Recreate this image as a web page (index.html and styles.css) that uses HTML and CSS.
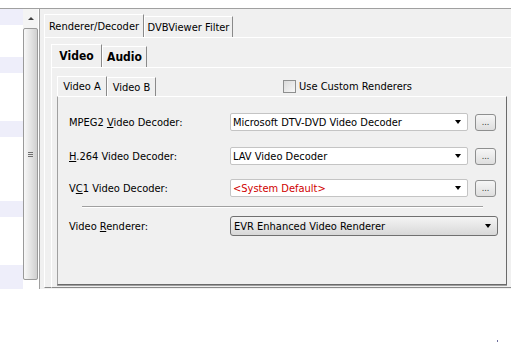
FILE: index.html
```html
<!DOCTYPE html>
<html lang="en">
<head>
    <meta charset="UTF-8">
    <title>Renderer/Decoder</title>
    <link rel="stylesheet" href="styles.css">
</head>
<body>
    <div class="window">
        <div class="list">
            <div class="list-row alt"></div>
            <div class="list-row"></div>
            <div class="list-row"></div>
            <div class="list-row alt"></div>
            <div class="list-row"></div>
            <div class="list-row"></div>
            <div class="list-row"></div>
            <div class="list-row alt"></div>
            <div class="list-row"></div>
            <div class="list-row"></div>
            <div class="list-row"></div>
            <div class="list-row"></div>
            <div class="list-row alt"></div>
            <div class="list-row"></div>
            <div class="list-row"></div>
            <div class="list-row"></div>
            <div class="list-row alt"></div>
            <div class="list-row alt"></div>
        </div>

        <div class="scrollbar">
            <div class="scroll-up"></div>
            <div class="thumb"><span class="grip"></span></div>
        </div>

        <div class="main">
            <div class="tabs tabs-outer">
                <div class="tab active">Renderer/Decoder</div>
                <div class="tab">DVBViewer Filter</div>
            </div>
            <div class="panel panel-outer">
                <div class="tabs tabs-inner">
                    <div class="tab active bold">Video</div>
                    <div class="tab bold">Audio</div>
                </div>
                <div class="panel panel-inner">
                    <div class="tabs tabs-sub">
                        <div class="tab active">Video A</div>
                        <div class="tab">Video B</div>
                        <label class="check">
                            <span class="check-box"></span>
                            Use Custom Renderers
                        </label>
                    </div>
                    <div class="panel panel-sub">
                        <div class="row">
                            <span class="label">MPEG2 <u>V</u>ideo Decoder:</span>
                            <div class="combo"><span>Microsoft DTV-DVD Video Decoder</span><i class="arrow"></i></div>
                            <button class="more">...</button>
                        </div>
                        <div class="row row-2">
                            <span class="label"><u>H</u>.264 Video Decoder:</span>
                            <div class="combo"><span>LAV Video Decoder</span><i class="arrow"></i></div>
                            <button class="more">...</button>
                        </div>
                        <div class="row row-3">
                            <span class="label">V<u>C</u>1 Video Decoder:</span>
                            <div class="combo"><span class="default">&lt;System Default&gt;</span><i class="arrow"></i></div>
                            <button class="more">...</button>
                        </div>
                        <div class="separator"></div>
                        <div class="row">
                            <span class="label">Video <u>R</u>enderer:</span>
                            <div class="combo combo-list"><span>EVR Enhanced Video Renderer</span><i class="arrow"></i></div>
                        </div>
                    </div>
                </div>
            </div>
        </div>
    </div>
    <span class="dot"></span>
</body>
</html>
```

FILE: styles.css
```css
html, body {
    margin: 0;
    padding: 0;
    overflow: hidden;
    background-color: #fff;
}
body {
    font-family: "DejaVu Sans Condensed", "DejaVu Sans", sans-serif;
    font-stretch: condensed;
    font-size: 11px;
    color: #000;
    white-space: nowrap;
}
.window {
    display: flex;
    margin-top: 8px;
    border-top: 1px solid #a0a0a0;
    height: 280px;
}

/* list on the left */
.list {
    width: 23px;
    flex: none;
}
.list-row {
    height: 16px;
}
.list-row.alt {
    background-color: #eeeefa;
}

/* scrollbar */
.scrollbar {
    width: 15px;
    height: 271px;
    flex: none;
    margin-right: 1px;
    background-color: #f4f4f4;
    display: flex;
    flex-direction: column;
}
.scroll-up {
    height: 19px;
    display: flex;
    align-items: center;
    justify-content: center;
}
.scroll-up::before {
    content: "";
    border-left: 3px solid transparent;
    border-right: 3px solid transparent;
    border-bottom: 3px solid #404040;
}
.thumb {
    flex: 1;
    border: 1px solid #9a9a9a;
    border-radius: 2px;
    background: linear-gradient(to right, #f8f8f8, #e4e4e4 50%, #cfcfcf);
    display: flex;
    align-items: center;
    justify-content: center;
}
.grip {
    width: 5px;
    height: 5px;
    background: repeating-linear-gradient(to bottom, #6f6f6f 0 1px, transparent 1px 2px);
}

/* right side */
.main {
    flex: 1;
    min-width: 0;
    overflow: hidden;
    border-left: 1px solid #a0a0a0;
    background-color: #f0f0f0;
    padding: 5px 0 0 4px;
}
.tabs {
    display: flex;
    align-items: flex-end;
    height: 23px;
}
.tab {
    box-sizing: border-box;
    height: 21px;
    padding: 0 2px;
    display: flex;
    align-items: center;
    justify-content: center;
    border-top: 1px solid #fff;
    border-left: 1px solid #fff;
    border-right: 1px solid #8a8a8a;
}
.tab.active {
    height: 23px;
}
.bold {
    font-weight: bold;
    font-size: 12px;
}
.tabs-outer .tab:nth-child(1) { width: 100px; }
.tabs-outer .tab:nth-child(2) { width: 89px; }
.tabs-inner .tab:nth-child(1) { width: 51px; }
.tabs-inner .tab:nth-child(2) { width: 45px; }
.tabs-sub {
    height: 20px;
}
.tabs-sub .tab { height: 19px; }
.tabs-sub .tab.active { height: 20px; }
.tabs-sub .tab:nth-child(1) { width: 50px; }
.tabs-sub .tab:nth-child(2) { width: 49px; }

.panel {
    box-sizing: border-box;
    border-top: 1px solid #fff;
    border-left: 1px solid #fff;
    border-right: 1px solid #8a8a8a;
    border-bottom: 1px solid #8a8a8a;
}
.panel-outer {
    width: 520px;
    height: 251px;
    padding: 6px 0 0 6px;
}
.panel-inner {
    width: 520px;
    height: 221px;
    padding: 8px 0 0 5px;
}
.panel-sub {
    width: 450px;
    height: 189px;
    padding: 16px 0 0 11px;
    border-left-color: #a0a0a0;
    border-right-color: #6a6a6a;
    border-bottom-color: #6a6a6a;
    box-shadow: 0 1px 0 #a0a0a0;
}

/* checkbox */
.check {
    display: flex;
    align-items: center;
    gap: 3px;
    margin-left: 127px;
    align-self: center;
}
.check-box {
    box-sizing: border-box;
    width: 13px;
    height: 13px;
    border: 1px solid #8e8f8f;
    background: linear-gradient(135deg, #dadada, #f7f7f7);
}

/* rows */
.row {
    display: flex;
    align-items: center;
    height: 18px;
}
.row-2 { margin-top: 16px; }
.row-3 { margin-top: 14px; }
.label {
    width: 161px;
    flex: none;
}
.combo {
    box-sizing: border-box;
    width: 238px;
    height: 18px;
    border: 1px solid #c4c4c4;
    border-radius: 2px;
    background-color: #fff;
    padding: 0 6px 0 2px;
    display: flex;
    align-items: center;
    justify-content: space-between;
}
.default {
    color: #d00000;
}
.arrow {
    width: 0;
    height: 0;
    border-left: 3px solid transparent;
    border-right: 3px solid transparent;
    border-top: 4px solid #000;
}
.more {
    box-sizing: border-box;
    width: 21px;
    height: 17px;
    margin-left: 7px;
    padding: 0;
    border: 1px solid #8e8f8f;
    border-radius: 3px;
    background: linear-gradient(#f6f6f6, #dedede);
    font-family: inherit;
    font-size: 9px;
    line-height: 14px;
    color: #333;
}
.separator {
    margin: 9px 0 9px 13px;
    width: 401px;
    height: 1px;
    background-color: #a0a0a0;
    border-bottom: 1px solid #fff;
}
.combo-list {
    width: 268px;
    height: 20px;
    border-color: #707070;
    border-radius: 3px;
    background: linear-gradient(#f4f4f4, #e6e6e6 50%, #d8d8d8);
    padding: 0 6px 0 3px;
}
.dot {
    position: absolute;
    left: 497px;
    top: 340px;
    width: 1px;
    height: 2px;
    background-color: #6c6c9c;
}
```
